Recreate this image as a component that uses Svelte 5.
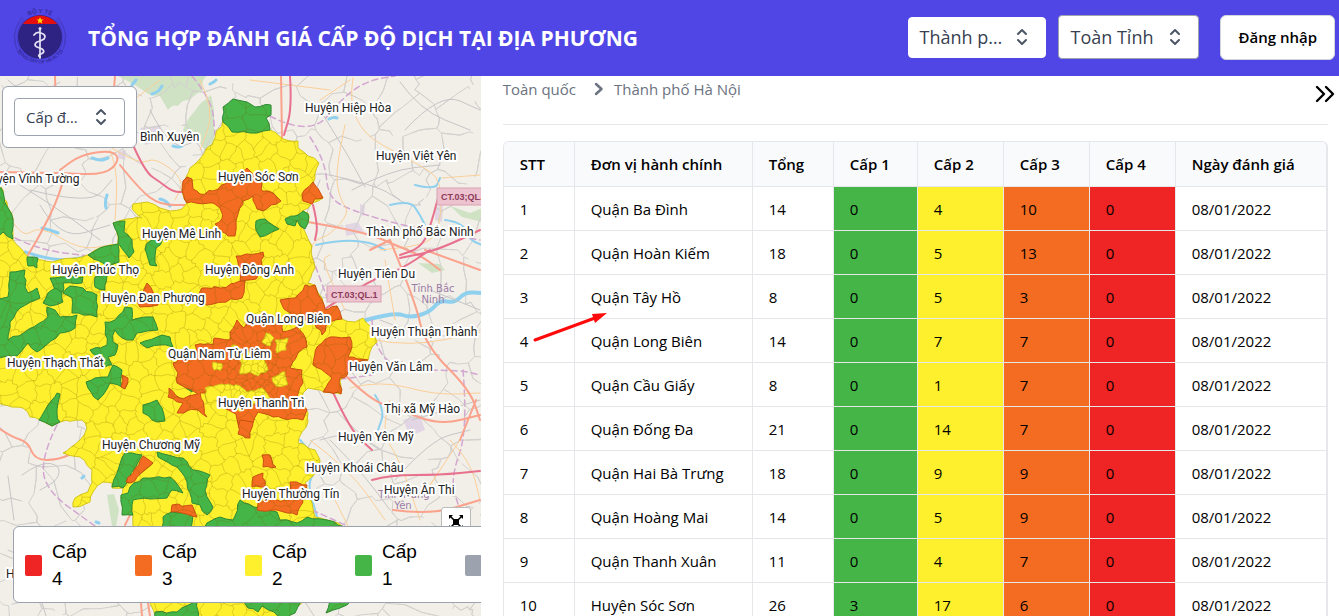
<script>
  const rows = [
    ['Quận Ba Đình', 14, 0, 4, 10, 0],
    ['Quận Hoàn Kiếm', 18, 0, 5, 13, 0],
    ['Quận Tây Hồ', 8, 0, 5, 3, 0],
    ['Quận Long Biên', 14, 0, 7, 7, 0],
    ['Quận Cầu Giấy', 8, 0, 1, 7, 0],
    ['Quận Đống Đa', 21, 0, 14, 7, 0],
    ['Quận Hai Bà Trưng', 18, 0, 9, 9, 0],
    ['Quận Hoàng Mai', 14, 0, 5, 9, 0],
    ['Quận Thanh Xuân', 11, 0, 4, 7, 0],
    ['Huyện Sóc Sơn', 26, 3, 17, 6, 0],
  ];
  const date = '08/01/2022';
  const legend = [
    ['Cấp 4', 'l4'],
    ['Cấp 3', 'l3'],
    ['Cấp 2', 'l2'],
    ['Cấp 1', 'l1'],
    ['', 'l0'],
  ];

  // Deterministic random numbers keep the drawn borders stable between renders.
  let seed = 7;
  const rnd = () => {
    seed = (seed * 16807) % 2147483647;
    return seed / 2147483647;
  };
  const parse = (s) => s.split(' ').map((p) => p.split(',').map(Number));

  // Breaks every edge into short, slightly displaced pieces, like a surveyed border.
  function rough(s, amp = 1.3, step = 6) {
    const pts = parse(s);
    let d = '';
    pts.forEach((a, i) => {
      const b = pts[(i + 1) % pts.length];
      const len = Math.hypot(b[0] - a[0], b[1] - a[1]);
      const n = Math.max(1, Math.round(len / step));
      for (let k = 0; k < n; k++) {
        const t = k / n;
        const j = k ? amp : 0;
        const x = a[0] + (b[0] - a[0]) * t + (rnd() - 0.5) * 2 * j;
        const y = a[1] + (b[1] - a[1]) * t + (rnd() - 0.5) * 2 * j;
        d += (d ? 'L' : 'M') + x.toFixed(1) + ' ' + y.toFixed(1);
      }
    });
    return d + 'Z';
  }

  // Rounds the corners of an M/L path, so that roads and rivers bend.
  function bend(d) {
    return d
      .split('M')
      .filter(Boolean)
      .map((part) => {
        const p = part.trim().split('L').map((q) => q.trim().split(' ').map(Number));
        let out = 'M' + p[0].join(' ');
        for (let i = 1; i < p.length - 1; i++) {
          out += 'Q' + p[i].join(' ') + ' ' + (p[i][0] + p[i + 1][0]) / 2 + ' ' + (p[i][1] + p[i + 1][1]) / 2;
        }
        return out + 'L' + p[p.length - 1].join(' ');
      })
      .join('');
  }

  // Voronoi mesh over a set of seeds, by clipping a box against its neighbours.
  // Edge midpoints are pushed aside by a smooth field, so shared edges agree.
  function mesh(seeds, reach, wave) {
    let d = '';
    for (const [x, y] of seeds) {
      let poly = [[x - reach, y - reach], [x + reach, y - reach], [x + reach, y + reach], [x - reach, y + reach]];
      for (const [u, v] of seeds) {
        const dx = u - x;
        const dy = v - y;
        const dist = dx * dx + dy * dy;
        if (!dist || dist > reach * reach * 5) continue;
        const lim = dist / 2;
        const out = [];
        for (let i = 0; i < poly.length; i++) {
          const p = poly[i];
          const q = poly[(i + 1) % poly.length];
          const fp = (p[0] - x) * dx + (p[1] - y) * dy - lim;
          const fq = (q[0] - x) * dx + (q[1] - y) * dy - lim;
          if (fp <= 0) out.push(p);
          if (fp * fq < 0) {
            const t = fp / (fp - fq);
            out.push([p[0] + (q[0] - p[0]) * t, p[1] + (q[1] - p[1]) * t]);
          }
        }
        poly = out;
      }
      poly.forEach((p, i) => {
        const q = poly[(i + 1) % poly.length];
        d += (i ? 'L' : 'M') + p[0].toFixed(1) + ' ' + p[1].toFixed(1);
        if (Math.hypot(p[0] - q[0], p[1] - q[1]) < wave * 3) return;
        for (const t of [0.33, 0.67]) {
          const mx = p[0] + (q[0] - p[0]) * t;
          const my = p[1] + (q[1] - p[1]) * t;
          d += 'L' + (mx + Math.sin(mx * 0.9 + my * 0.7) * wave).toFixed(1) + ' ' + (my + Math.cos(mx * 0.8 - my) * wave).toFixed(1);
        }
      });
      d += 'Z';
    }
    return d;
  }
  function scatter(x0, y0, x1, y1, size, keep = () => true) {
    const out = [];
    for (let y = y0; y < y1; y += size)
      for (let x = x0; x < x1; x += size) {
        const p = [x + rnd() * size, y + rnd() * size];
        if (keep(p)) out.push(p);
      }
    return out;
  }
  const inCity = ([x, y]) => Math.hypot(x - 255, y - 368) < 34;
  const communes = mesh(
    [...scatter(-10, 90, 390, 630, 15, (p) => !inCity(p)), ...scatter(215, 330, 295, 408, 7, inCity)],
    28,
    1.5,
  );
  const lanes = mesh(scatter(-40, 50, 520, 640, 40), 80, 4);

  const city = rough(
    '223,120 215,138 200,159 190,168 186,177 182,190 187,203 182,209 170,211 160,208 147,202 133,204 132,209 142,218 127,219 113,223 117,233 118,244 100,248 90,254 82,257 53,262 28,257 13,240 13,219 8,208 0,186 -8,186 -8,400 12,407 23,408 30,417 40,420 52,426 60,422 82,420 87,428 80,440 63,453 80,457 92,470 92,483 88,492 75,498 73,507 90,502 93,492 103,482 112,483 112,488 123,488 121,497 123,515 133,515 133,526 150,603 158,622 285,622 302,603 342,526 327,520 315,517 312,503 308,493 305,483 318,470 320,460 315,450 298,443 302,432 308,422 308,413 302,403 303,393 308,388 320,390 341,394 340,380 347,375 350,362 368,360 370,352 377,342 375,332 363,318 355,322 342,319 337,306 325,310 322,298 315,285 308,283 312,273 315,268 312,257 312,246 303,228 308,223 308,213 302,211 312,203 323,198 313,183 315,173 319,163 308,156 298,148 298,141 283,139 270,130 250,126',
  );
  const greens = [
    '223,107 233,99 247,102 255,107 271,105 271,115 266,118 270,130 250,133 232,132 223,122',
    '-5,180 0,186 8,208 13,219 13,239 3,232 -5,240',
    '113,223 125,221 124,232 132,240 134,252 129,258 123,250 118,243 117,232',
    '88,255 100,248 118,244 119,262 108,267',
    '50,278 83,277 82,283 63,283 63,292 55,290',
    '95,277 107,275 105,290 95,287',
    '27,257 38,258 37,268 28,266',
    '145,249 150,241 163,239 156,248 155,256 157,266 150,265',
    '10,272 25,270 25,287 28,293 37,288 40,298 20,308 10,322 8,340 25,332 48,317 47,307 55,310 60,317 77,315 75,328 60,333 37,352 28,343 17,356 -5,358 -5,300 8,297',
    '43,303 48,293 56,288 62,293 63,302 50,306',
    '63,293 70,286 83,288 97,295 97,317 72,313 72,298',
    '125,307 132,308 132,320 153,317 158,330 137,333 133,340 122,338 115,330 113,342 118,345 115,355 108,357 112,365 103,368 98,357 90,350 107,345 105,322 115,320',
    '140,343 162,335 170,337 173,347 160,345 147,348',
    '86,382 95,378 108,377 113,365 122,370 122,387 110,383 98,400 88,388',
    '57,393 60,394 58,403 57,413 60,422 52,426 39,420 48,405',
    '143,405 157,400 162,408 165,421 157,422 143,413',
    '182,383 187,375 195,382 192,392',
    '256,221 265,219 279,229 260,237 256,230',
    '285,219 295,216 303,211 308,214 308,223 305,229 300,226 297,220 295,226 287,224',
    '125,453 142,455 127,483 123,488 112,487 117,473',
    '130,487 143,478 170,477 183,493 172,490 167,498 133,500 133,515 122,515 121,495 128,493',
    '157,452 183,458 193,470 210,475 205,490 213,507 207,515 200,505 192,503 187,482 177,467 158,457',
    '163,517 172,512 193,515 190,535 162,535',
    '207,523 220,517 233,520 240,500 260,508 277,512 280,520 297,523 307,517 327,520 345,527 345,545 200,545',
    '155,612 177,612 197,600 200,622 155,622',
    '240,596 302,600 295,613 282,622 274,612 262,606 258,612 248,608',
    '326,613 330,600 352,600 340,608',
  ].map((s) => rough(s));
  const oranges = [
    '187,177 192,179 193,189 200,194 213,191 240,175 247,168 262,183 262,191 273,193 281,201 263,211 257,209 253,196 243,201 238,214 235,236 228,236 215,224 222,219 220,208 213,203 187,203 182,191 183,181',
    '302,194 313,182 323,198 315,199 312,204 303,201',
    '236,256 263,252 262,266 256,279 240,281',
    '197,303 202,288 220,288 245,281 242,298 207,305',
    '147,283 157,297 158,305 140,307 137,300 143,294',
    '173,363 197,350 195,345 213,345 214,338 230,340 230,332 237,320 244,328 252,318 267,322 273,326 282,322 283,332 297,327 305,337 307,347 298,353 290,368 302,370 303,383 297,397 307,410 303,420 273,417 258,412 253,423 240,430 236,414 224,408 220,400 205,393 200,393 207,417 198,410 177,413 183,403 168,397 169,388 180,398 198,394 186,388 177,383 178,373',
    '280,300 295,298 305,285 315,285 322,300 325,310 337,306 342,319 330,322 322,335 315,323 290,313 284,309',
    '317,347 330,337 350,337 352,347 348,357 368,360 352,365 347,375 340,378 341,394 323,392 332,378 313,365',
    '262,455 270,455 276,467 263,467',
    '253,477 263,473 265,487 252,487',
    '290,482 307,485 303,498 297,515 277,510 257,510 258,500 290,500',
    '240,420 253,422 250,438 238,434',
    '172,505 192,505 197,517 182,513 171,512',
    '122,375 128,378 125,389 121,387',
    '143,456 153,463 130,483 126,482',
  ].map((s) => rough(s, 1.5, 5));
  const holes = [
    '275,340 288,338 286,350 277,353',
    '240,356 248,350 258,360 264,358 268,370 258,376 250,372 240,374',
    '205,388 222,384 240,386 247,392 262,388 270,398 258,404 248,402 240,412 230,400 207,402',
    '266,333 274,338 270,346 262,342',
    '285,372 272,378 276,386 288,384',
    '213,362 222,364 220,371 214,370',
    '232,345 240,348 236,355 230,352',
  ].map((s) => rough(s, 1.5, 4));

  const roads = [
    ['#c6c5c6', 1, 'M8 80L30 100L60 82M40 90L90 120M150 110L170 150L200 140M20 300L60 320M20 185L60 210L100 240M40 205L60 240L110 225M30 190L90 205L112 180M22 475L40 462L60 465L58 480L40 490M46 616L30 560L8 550M8 476L14 520M320 110L345 150L365 187M352 190L390 170L440 165M405 130L440 92L480 110M330 175L375 185L400 200M320 180L300 230M400 82L420 110L470 130M395 480L430 440L470 430M330 440L360 470L390 510M430 290L480 310M380 320L430 340L480 330M412 420L480 400M320 440L350 430L380 450'],
    ['#fbcf98', 1, 'M160 80L120 110L90 135L140 165L155 157L185 180L175 200M110 150L118 170L115 220M0 200L20 240L40 225L80 250L110 245M250 80L330 90M353 78L345 125L420 165L442 180L440 230L425 245L380 250M442 178L480 175M345 125L335 170L340 200L350 212L330 235L315 240L310 250M320 100L350 80M375 340L410 347L480 332M350 388L380 380L435 395L480 393M310 440L350 470L385 520M390 400L380 430L400 460L420 520M460 440L420 500L440 470M385 260L395 320M200 80L215 110L200 150M330 490L350 530M345 310L320 260L330 255M450 440L470 460L480 500'],
    ['#fba28c', 2, 'M115 76L113 100M55 76L56 110M0 172L60 173L105 175L120 160L112 150L80 155L60 170M120 165L140 190L160 205L190 205M65 173L60 195L40 235L28 255M0 429L12 437L28 442L35 460L58 460L80 450M130 515L125 525M281 76L282 138M308 222L365 232L395 245L420 255L440 270M390 240L415 300L425 345L470 390L480 420M390 240L370 250M425 250L480 270M345 375L370 400L400 410L440 425L480 415M476 400L460 440M393 510L430 515L480 500M141 603L142 616M148 603L150 616'],
    ['#e8718d', 2, 'M290 76L292 108L284 135M133 145L145 172L160 182L173 192L187 192M313 205L318 225L315 240M440 190L430 230L420 248L400 255M480 230L440 250L400 258M320 312L370 280L400 270L430 250M332 390L350 430L372 450M372 480L390 475L440 475L480 471M245 603L244 616'],
  ].map(([tone, width, d]) => [tone, width, bend(d)]);
  const rivers = [
    [4, 'M366 320L395 312L410 318L430 312L440 300L455 303L465 292L482 293'],
    [2, 'M445 220L462 222L470 240L482 245M390 205L410 200L420 215L425 225M415 185L435 190L440 178M316 245L340 240L370 242L385 250M375 395L385 410L378 430M318 520L312 500L308 480L322 465L300 440'],
    [3, 'M92 158L100 161L108 158M152 94L158 92L162 86M132 85L136 80M107 195L105 201L106 208M42 228L50 230L58 233M160 199L165 200L170 206M210 84L214 82L216 80M329 119L333 117L337 118M173 146L179 148L184 144M82 478L84 476M96 522L99 523M25 252L55 262L92 256'],
  ].map(([width, d]) => [width, bend(d)]);
  const borders = bend(
    'M192 76L212 100L215 135M270 116L310 137L345 95L370 80L395 76M310 137L325 160L328 197L350 210L400 225L480 240M15 238L40 250L88 256M57 425L42 455L45 490L95 526M312 257L328 300M372 320L375 370L460 370L480 375M320 382L372 375M463 370L468 430L450 480L460 510M312 510L345 525',
  );

  const labels = [
    ['Huyện Hiệp Hòa', 305, 112],
    ['Bình Xuyên', 140, 141],
    ['Huyện Việt Yên', 376, 160],
    ['yện Vĩnh Tường', -3, 183],
    ['Huyện Sóc Sơn', 218, 181],
    ['Thành phố Bắc Ninh', 366, 236],
    ['Huyện Mê Linh', 142, 238],
    ['Huyện Phúc Thọ', 52, 274],
    ['Huyện Đông Anh', 205, 274],
    ['Huyện Tiên Du', 338, 278],
    ['Huyện Đan Phượng', 102, 302],
    ['Quận Long Biên', 246, 323],
    ['Huyện Thuận Thành', 371, 336],
    ['Quận Nam Từ Liêm', 168, 358],
    ['Huyện Thạch Thất', 7, 367],
    ['Huyện Văn Lâm', 349, 371],
    ['Huyện Thanh Trì', 218, 407],
    ['Thị xã Mỹ Hào', 384, 413],
    ['Huyện Yên Mỹ', 338, 441],
    ['Huyện Chương Mỹ', 102, 449],
    ['Huyện Khoái Châu', 306, 472],
    ['Huyện Ân Thi', 384, 494],
    ['Huyện Thường Tín', 242, 498],
    ['H', 6, 578],
  ];
</script>

{#snippet updown()}
  <svg class="updown" viewBox="0 0 12 20" aria-hidden="true">
    <path d="M2 7L6 3L10 7M2 13L6 17L10 13" fill="none" stroke="#4b5563" stroke-width="2" stroke-linecap="round" stroke-linejoin="round" />
  </svg>
{/snippet}

<div class="app">
  <header>
    <svg class="logo" viewBox="0 0 56 56" role="img" aria-label="Bộ Y tế">
      <defs>
        <path id="arc-top" d="M4 28A24 24 0 0 1 52 28" />
        <path id="arc-bottom" d="M1.500 28A26.500 26.500 0 0 0 54.500 28" />
        <clipPath id="disc"><circle cx="28" cy="28" r="21.500" /></clipPath>
      </defs>
      <g fill="none" stroke="#453bc4" stroke-width="1">
        <path d="M10 8Q-3 26 7 46M12 10Q0 26 9 43M8 12Q-2 26 5 40" />
        <path d="M46 8Q59 26 49 46M44 10Q56 26 47 43M48 12Q58 26 51 40" />
      </g>
      <circle cx="28" cy="28" r="22" fill="#2e2383" />
      <path clip-path="url(#disc)" d="M0 0H56V15H0Z" fill="#e60f0f" />
      <path d="M28 8l1 2.400 2.600.1-2 1.600.7 2.500-2.300-1.400-2.200 1.400.7-2.500-2-1.600 2.500-.1z" fill="#fd0" />
      <g fill="none" stroke="#e4e3f5" stroke-linecap="round">
        <path d="M28 20V49" stroke-width="1.700" />
        <path d="M22 26Q25 22 29 24Q35 26 32 30Q29 32 25 33Q21 36 25 38L30 40Q34 43 29 45Q25 46 28 48" stroke-width="1.800" />
      </g>
      <circle cx="28" cy="19.500" r="1.500" fill="#e4e3f5" />
      <g fill="#352ba0" font-family="Liberation Sans, sans-serif" font-weight="700" text-anchor="middle">
        <text font-size="6"><textPath href="#arc-top" startOffset="50%">BỘ Y TẾ</textPath></text>
        <text font-size="5"><textPath href="#arc-bottom" startOffset="50%">MINISTRY OF HEALTH</textPath></text>
      </g>
    </svg>
    <h1>TỔNG HỢP ĐÁNH GIÁ CẤP ĐỘ DỊCH TẠI ĐỊA PHƯƠNG</h1>
    <div class="tools">
      <div class="pick plain">
        <select aria-label="Tỉnh thành"><option>Thành phố Hà Nội</option></select>
        {@render updown()}
      </div>
      <div class="pick">
        <select aria-label="Quận huyện"><option>Toàn Tỉnh</option></select>
        {@render updown()}
      </div>
      <button class="login" type="button">Đăng nhập</button>
    </div>
  </header>

  <main>
    <section class="map" aria-label="Bản đồ cấp độ dịch">
      <svg class="canvas" aria-hidden="true">
        <defs>
          <clipPath id="inside">
            <path d={city} />
            {#each greens as d}<path {d} />{/each}
          </clipPath>
        </defs>
        <g transform="translate(0 -76)">
          <g fill="#cfe3c4">
            <path d="M118 76H206Q200 84 203 90Q195 94 190 100Q182 99 178 106Q172 104 168 110L160 96L150 95L135 85Z" />
            <path d="M183 130Q188 118 194 112L200 104L211 95L214 110V140L206 152L198 140L188 138Z" />
            <path d="M450 206L470 213L482 208V222L462 217Z M418 263L440 264L445 270L432 273Z M107 495L114 494L119 510L116 526H112Z" />
          </g>
          <g fill="#e2d6e4">
            <path d="M140 128L160 125L162 140L145 145Z M435 208L443 205L442 222L435 220Z M403 420L420 415L425 430L410 436Z M345 225L358 222L364 232L346 236Z M118 152L126 150L125 160L118 158Z M360 204L365 206L364 216L360 215Z" />
          </g>
          <path d={lanes} fill="none" stroke="#d3d1ce" stroke-width="1" stroke-dasharray="70 14 40 22" />
          <g fill="none" stroke-linejoin="round" stroke-linecap="round">
            {#each rivers as [width, d]}<path {d} stroke="#8fd0ee" stroke-width={width} />{/each}
            <path d={borders} stroke="#d3a7d0" stroke-width="1.500" stroke-dasharray="6 4" />
            {#each roads as [tone, width, d]}<path {d} stroke={tone} stroke-width={width} />{/each}
          </g>
          <path d={city} fill="#fff02e" stroke="#d3c61a" />
          <g fill="#45b548" stroke="#2f8a33">{#each greens as d}<path {d} />{/each}</g>
          <g fill="#f36c21" stroke="#c9500f">{#each oranges as d}<path {d} />{/each}</g>
          <g fill="#fff02e" stroke="#d3c61a">{#each holes as d}<path {d} />{/each}</g>
          <path d={communes} clip-path="url(#inside)" fill="none" stroke="#7d6f00" stroke-opacity=".13" />
          <g class="shields">
            <rect x="327" y="286" width="54" height="16" />
            <text x="331" y="298">CT.03;QL.1</text>
            <rect x="437" y="188" width="54" height="17" />
            <text x="441" y="200">CT.03;QL.</text>
          </g>
          <g class="province">
            <text x="433" y="292">Tỉnh Bắc</text>
            <text x="433" y="303">Ninh</text>
            <text x="404" y="498">Tỉnh Hưng</text>
            <text x="403" y="509">Yên</text>
          </g>
          <g class="names">
            {#each labels as [name, x, y]}<text {x} {y}>{name}</text>{/each}
          </g>
        </g>
      </svg>

      <div class="filter">
        <div class="pick small">
          <select aria-label="Cấp độ"><option>Cấp độ dịch</option></select>
          {@render updown()}
        </div>
      </div>

      <button class="full" type="button" aria-label="Toàn màn hình">
        <svg viewBox="0 0 14 14" aria-hidden="true">
          <path d="M4 4H10V10H4Z M0 0H4L0 4Z M14 0V4L10 0Z M0 14V10L4 14Z M14 14H10L14 10Z" />
          <path d="M1 1L13 13M13 1L1 13" stroke="#000" stroke-width="1.500" />
        </svg>
      </button>

      <ul class="legend">
        {#each legend as [text, tone]}
          <li><i class={tone}></i>{#if text}<span>{text}</span>{/if}</li>
        {/each}
      </ul>
    </section>

    <section class="data">
      <div class="top">
        <nav aria-label="Đường dẫn">
          <a href="#toan-quoc">Toàn quốc</a>
          <svg class="chev" viewBox="0 0 10 14" aria-hidden="true">
            <path d="M2 2L7.500 7L2 12" fill="none" stroke="#6b7280" stroke-width="2.500" stroke-linecap="round" stroke-linejoin="round" />
          </svg>
          <a href="#ha-noi">Thành phố Hà Nội</a>
        </nav>
        <button class="hide" type="button" aria-label="Thu gọn">
          <svg viewBox="0 0 20 18" aria-hidden="true">
            <path d="M2 2L9 9L2 16M11 2L18 9L11 16" fill="none" stroke="#000" stroke-width="2.400" stroke-linecap="round" stroke-linejoin="round" />
          </svg>
        </button>
      </div>

      <div class="sheet">
        <table>
          <colgroup>
            <col class="c-no" /><col class="c-name" /><col class="c-sum" /><col class="c-first" />
            <col class="c-level" /><col class="c-level" /><col class="c-level" /><col class="c-date" />
          </colgroup>
          <thead>
            <tr>
              <th>STT</th><th>Đơn vị hành chính</th><th>Tổng</th><th>Cấp 1</th>
              <th>Cấp 2</th><th>Cấp 3</th><th>Cấp 4</th><th>Ngày đánh giá</th>
            </tr>
          </thead>
          <tbody>
            {#each rows as [name, sum, a, b, c, d], i}
              <tr>
                <td>{i + 1}</td><td>{name}</td><td>{sum}</td>
                <td class="l1">{a}</td><td class="l2">{b}</td><td class="l3">{c}</td><td class="l4">{d}</td>
                <td>{date}</td>
              </tr>
            {/each}
          </tbody>
        </table>
        <svg class="pointer" viewBox="0 0 76 32" aria-hidden="true">
          <path d="M2 29L62 7" stroke="#ff0a0a" stroke-width="3" stroke-linecap="round" />
          <path d="M74 2L59 3L62 12Z" fill="#ff0a0a" />
        </svg>
      </div>
    </section>
  </main>
</div>

<style>
  :global(body) {
    margin: 0;
  }
  .app {
    display: flex;
    flex-direction: column;
    height: 100vh;
    overflow: hidden;
    background: #fff;
    color: #000;
    font-family: 'Open Sans', 'Noto Sans', sans-serif;
    font-size: 15px;
  }
  .app :is(*) {
    box-sizing: border-box;
  }
  header {
    display: flex;
    align-items: center;
    flex: none;
    height: 76px;
    padding: 0 4px 2px 12px;
    background: #4f46e5;
  }
  .logo {
    width: 56px;
    height: 56px;
    overflow: visible;
  }
  h1 {
    margin: 0 0 0 20px;
    padding-top: 2px;
    color: #fff;
    font-size: 21px;
    font-weight: 700;
    line-height: 32px;
    white-space: nowrap;
  }
  .tools {
    display: flex;
    align-items: center;
    gap: 12px;
    margin-left: auto;
  }
  .pick {
    position: relative;
    width: 141px;
  }
  .pick select {
    display: block;
    width: 100%;
    height: 44px;
    padding: 0 40px 0 11px;
    appearance: none;
    border: 1px solid #9ca3af;
    border-radius: 4px;
    background: #fff;
    color: #374151;
    font: 400 18px 'Open Sans', 'Noto Sans', sans-serif;
    text-overflow: ellipsis;
  }
  .pick.plain {
    width: 138px;
  }
  .plain select {
    height: 41px;
    padding-left: 10px;
    border-color: #fff;
  }
  .updown {
    position: absolute;
    top: 50%;
    right: 18px;
    width: 12px;
    height: 20px;
    transform: translateY(-50%);
    pointer-events: none;
  }
  .login {
    height: 45px;
    margin-left: 9px;
    padding: 0 17px;
    border: 1px solid #d1d5db;
    border-radius: 6px;
    background: #fff;
    color: #000;
    font: 600 15px 'Open Sans', 'Noto Sans', sans-serif;
  }
  main {
    display: flex;
    flex: 1;
    min-height: 0;
  }
  .map {
    position: relative;
    flex: none;
    width: 35.9%;
    overflow: hidden;
    background: #f2efe9;
  }
  .canvas {
    display: block;
    width: 100%;
    height: 100%;
  }
  .names {
    fill: #222;
    stroke: #fff;
    stroke-width: 4px;
    stroke-linejoin: round;
    paint-order: stroke;
    font: 12px Roboto, sans-serif;
  }
  .shields rect {
    fill: #edc3cf;
    stroke: #d8a3b4;
  }
  .shields text {
    fill: #8c3a5c;
    font: 700 9px 'Liberation Sans', sans-serif;
  }
  .province {
    fill: #9b7ba5;
    text-anchor: middle;
    font: 10px 'DejaVu Sans', sans-serif;
  }
  .filter {
    position: absolute;
    top: 10px;
    left: 2px;
    padding: 11px;
    border: 1px solid #9ca3af;
    border-radius: 6px;
    background: #fff;
  }
  .pick.small {
    width: 111px;
  }
  .small select {
    height: 38px;
    font-size: 15px;
  }
  .full {
    position: absolute;
    right: 10px;
    bottom: 79px;
    display: grid;
    place-items: center;
    width: 30px;
    height: 30px;
    padding: 0;
    border: 1px solid #bbb;
    border-radius: 3px;
    background: #fff;
  }
  .full svg {
    width: 14px;
    height: 14px;
  }
  .legend {
    position: absolute;
    left: 13px;
    bottom: 13px;
    display: flex;
    margin: 0;
    padding: 11px 10px 10px 11px;
    border: 1px solid #9ca3af;
    border-radius: 6px;
    background: #fff;
    list-style: none;
    font: 19px/27px 'Liberation Sans', Arial, sans-serif;
  }
  .legend li {
    display: flex;
    align-items: center;
    gap: 10px;
    width: 110px;
    flex: none;
  }
  .legend span {
    width: 40px;
  }
  .legend i {
    width: 17px;
    height: 21px;
    border-radius: 2px;
  }
  .l0 {
    background: #9ca3af;
  }
  .l1 {
    background: #45b548;
  }
  .l2 {
    background: #fff02e;
  }
  .l3 {
    background: #f36c21;
  }
  .l4 {
    background: #ee2524;
  }
  .data {
    flex: 1;
    min-width: 0;
    padding: 0 11px 0 22px;
    overflow: hidden;
  }
  .top {
    position: relative;
    height: 49px;
    border-bottom: 1px solid #e5e7eb;
  }
  nav {
    display: flex;
    align-items: center;
    height: 26px;
  }
  nav a {
    color: #6b7280;
    text-decoration: none;
  }
  .chev {
    width: 10px;
    height: 14px;
    margin: 0 10px 0 18px;
  }
  .hide {
    position: absolute;
    top: 9px;
    right: -7px;
    width: 20px;
    height: 18px;
    padding: 0;
    border: 0;
    background: none;
  }
  .hide svg {
    display: block;
    width: 20px;
    height: 18px;
  }
  .sheet {
    position: relative;
    margin-top: 16px;
    border: 1px solid #e5e7eb;
    border-right-width: 2px;
    border-radius: 6px 6px 0 0;
    overflow: hidden;
  }
  table {
    width: 100%;
    table-layout: fixed;
    border-collapse: separate;
    border-spacing: 0;
  }
  th,
  td {
    height: 44px;
    padding: 0 0 0 16px;
    border-right: 1px solid #e5e7eb;
    border-bottom: 1px solid #e5e7eb;
    font-weight: 400;
    text-align: left;
    white-space: nowrap;
  }
  th {
    height: 45px;
    background: #f9fafb;
    font-weight: 600;
  }
  th:last-child,
  td:last-child {
    border-right: 0;
  }
  .c-no {
    width: 71px;
  }
  .c-name {
    width: 178px;
  }
  .c-sum {
    width: 81px;
  }
  .c-first {
    width: 84px;
  }
  .c-level {
    width: 86px;
  }
  .c-date {
    width: 151px;
  }
  .pointer {
    position: absolute;
    top: 169px;
    left: 29px;
    width: 76px;
    height: 32px;
  }
</style>
